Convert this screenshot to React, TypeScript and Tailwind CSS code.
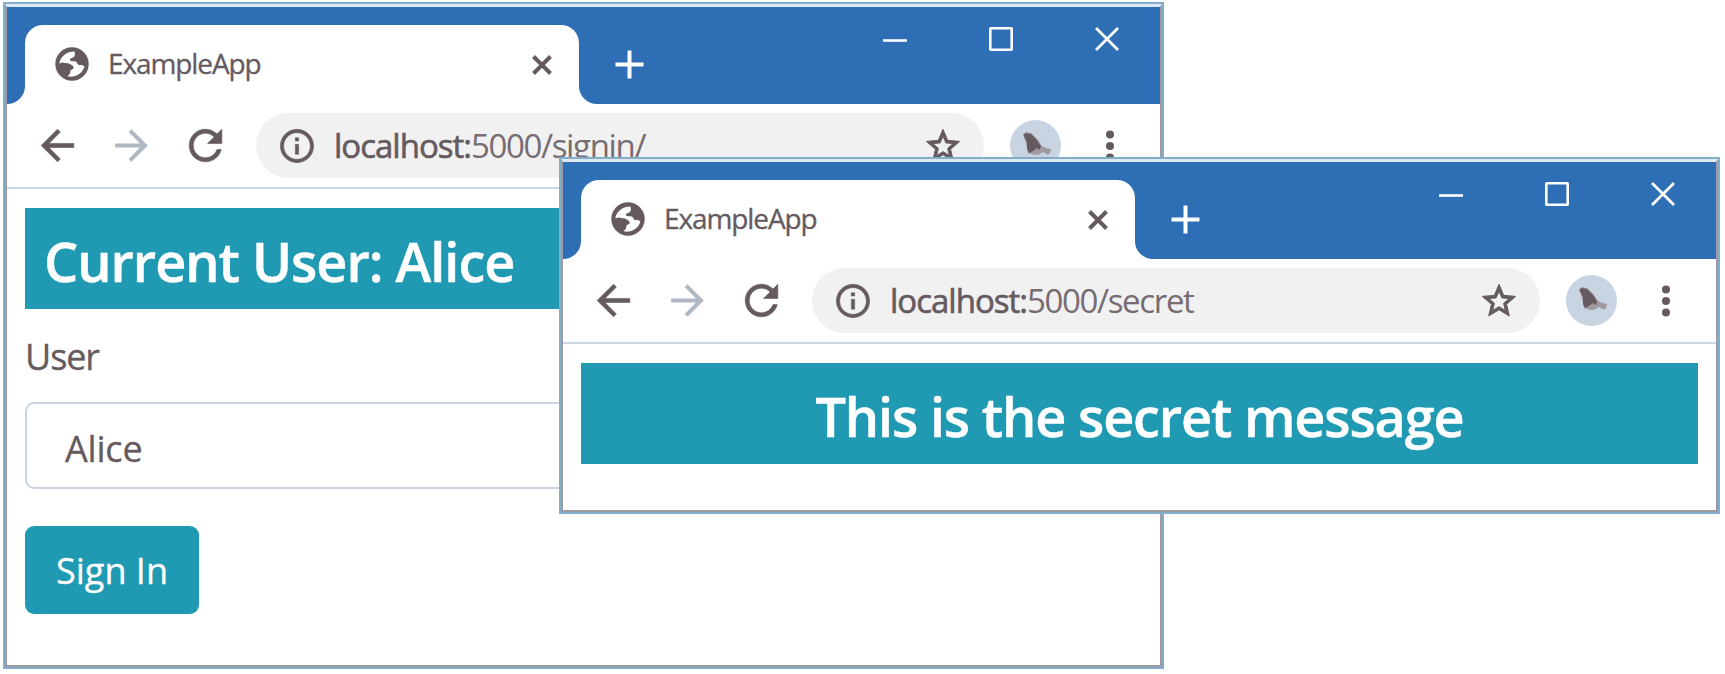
import type { ReactNode } from "react";
import { MdArrowBack, MdArrowForward, MdInfoOutline, MdRefresh, MdStarBorder } from "react-icons/md";

function Globe() {
  return (
    <svg className="-mt-px size-[34px] shrink-0" viewBox="0 0 34 34">
      <circle cx="17" cy="17" r="16.7" fill="#655a60" />
      <path
        d="M19.5 4.6 15 5C9 7 5 11 4.3 16.5L7 15.5 14 16.5 17.5 18.5 19 21 15.5 23.5 15 26.5 12.5 29.3C19 31 27 27.5 29.5 19.5L27 18 23.5 18 21 14.5 15.5 14 14.8 12 19 10 20 7.5Z"
        fill="#fff"
      />
    </svg>
  );
}

function TabStrip() {
  return (
    <div className="flex h-[97px] bg-[#2d6eb4] pt-[18px]">
      <div className="w-[18px] bg-white">
        <div className="h-full rounded-br-[18px] bg-[#2d6eb4]" />
      </div>
      <div className="flex w-[554px] items-center rounded-t-[18px] bg-white pr-[27px] pl-[30px]">
        <Globe />
        <span className="-mt-[3px] ml-[19px] text-[28px] leading-[40px] tracking-[-1.1px] [-webkit-text-stroke:0.3px_#655a60]">
          ExampleApp
        </span>
        <svg className="ml-auto size-[20px]" viewBox="0 0 20 20" stroke="#655a60" strokeWidth="4">
          <path d="M1.5 1.5 18.5 18.5M18.5 1.5 1.5 18.5" />
        </svg>
      </div>
      <div className="flex-1 bg-white">
        <div className="flex h-full items-start rounded-bl-[18px] bg-[#2d6eb4] pr-[41px] pl-[36px]">
          <svg className="mt-[25px] size-[29px]" viewBox="0 0 29 29" stroke="#fff" strokeWidth="4">
            <path d="M14.5 0.5V28.5M0.5 14.5H28.5" />
          </svg>
          <div className="mt-[2px] ml-auto flex gap-[82px]">
            <svg className="size-[24px]" viewBox="0 0 24 24" stroke="#fff" strokeWidth="2.6">
              <path d="M0 13.5H24" />
            </svg>
            <svg className="size-[24px]" viewBox="0 0 24 24" fill="none" stroke="#fff" strokeWidth="2.6">
              <rect x="1.3" y="1.3" width="21.4" height="21.4" rx="0.5" />
            </svg>
            <svg className="size-[24px]" viewBox="0 0 24 24" stroke="#fff" strokeWidth="2.8">
              <path d="M1 1 23 23M23 1 1 23" />
            </svg>
          </div>
        </div>
      </div>
    </div>
  );
}

function Avatar() {
  return (
    <svg className="ml-[26px] size-[51px] shrink-0" viewBox="0 0 51 51">
      <circle cx="25.5" cy="25.5" r="25.5" fill="#c8d4e2" />
      <path d="M13 14 16 12 22 13.5 28 20 32 26 36 28 41 29 40.5 32 38 35 33 32 29 34.5 24 35 18 33 16.5 25Z" fill="#a09a9f" />
      <path d="M13.5 15 16 13 21 14 27 20 31 26.5 29.5 30 27 28 23 31 19 33 17 29 17 22Z" fill="#655a60" />
    </svg>
  );
}

function Toolbar({ path }: { path: string }) {
  return (
    <div className="flex h-[85px] items-center border-b-2 border-[#ccd7e4] pl-[26px] text-[#655a60] [&_path[fill=none]]:stroke-none">
      <MdArrowBack className="size-[49px] shrink-0 stroke-[0.3px]" />
      <MdArrowForward className="ml-[25px] size-[49px] shrink-0 text-[#b0b8c4]" />
      <MdRefresh className="ml-[25px] size-[49px] shrink-0 stroke-[0.3px]" />
      <div className="ml-[26px] flex h-[65px] w-[728px] shrink-0 items-center rounded-full bg-[#f1f1f1] pr-[21px] pl-[21px]">
        <MdInfoOutline className="size-[40px] shrink-0 stroke-[0.3px]" />
        <span className="ml-[17px] text-[33px] leading-[44px] tracking-[-1.35px] whitespace-nowrap text-[#766c72]">
          <span className="tracking-[-1px] text-[#655a60] [-webkit-text-stroke:0.6px_#655a60]">localhost:</span>
          {path}
        </span>
        <MdStarBorder className="ml-auto size-[40px] shrink-0 stroke-[0.6px]" />
      </div>
      <Avatar />
      <svg className="ml-[45px] h-[32px] w-[8px] shrink-0" viewBox="0 0 8 32" fill="#655a60">
        <circle cx="4" cy="4.5" r="4" />
        <circle cx="4" cy="16" r="4" />
        <circle cx="4" cy="27.5" r="4" />
      </svg>
    </div>
  );
}

function BrowserWindow({ place, path, children }: { place: string; path: string; children: ReactNode }) {
  return (
    <div className={`absolute w-[1161px] border-2 border-[#82aecb] ${place}`}>
      <div className="h-full border-2 border-t-3 border-[#9d9ba1] border-t-[#dfe8f0] bg-white">
        <TabStrip />
        <Toolbar path={path} />
        <div className="px-[18px] pt-[19px]">{children}</div>
      </div>
    </div>
  );
}

export default function App() {
  return (
    <main className="relative h-[674px] w-[1725px] overflow-hidden bg-white font-['Open_Sans','Noto_Sans',sans-serif] text-[#655a60]">
      <BrowserWindow place="left-[3px] top-[2px] h-[667px]" path="5000/signin/">
        <h1 className="h-[101px] bg-[#1f9ab2] pl-[19px] text-[54px] leading-[106px] font-semibold tracking-[-1px] text-white [-webkit-text-stroke:0.5px_#fff]">
          Current User: Alice
        </h1>
        <label className="mt-[24px] block text-[36px] leading-[48px] tracking-[-1.1px] [-webkit-text-stroke:0.3px_#655a60]">
          User
        </label>
        <div className="mt-[21px] h-[87px] rounded-[9px] border-2 border-[#c8d4e2] pl-[38px] text-[36px] leading-[89px] tracking-[-0.2px] [-webkit-text-stroke:0.3px_#655a60]">
          Alice
        </div>
        <button className="mt-[37px] block h-[88px] w-[174px] rounded-[9px] bg-[#1f9ab2] text-[36px] leading-[90px] tracking-[0px] text-white [-webkit-text-stroke:0.3px_#fff]">
          Sign In
        </button>
      </BrowserWindow>
      <BrowserWindow place="left-[559px] top-[157px] h-[357px]" path="5000/secret">
        <h1 className="h-[101px] bg-[#1f9ab2] text-center text-[54px] leading-[106px] font-semibold tracking-[-1.15px] text-white [-webkit-text-stroke:0.5px_#fff]">
          This is the secret message
        </h1>
      </BrowserWindow>
    </main>
  );
}
